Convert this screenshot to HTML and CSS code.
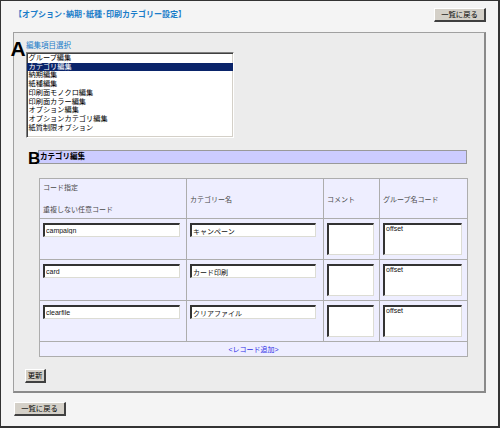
FILE: index.html
```html
<!DOCTYPE html>
<html lang="ja">
<head>
    <meta charset="UTF-8">
    <meta name="viewport" content="width=device-width, initial-scale=1.0">
    <title>オプション・納期・紙種・印刷カテゴリー設定</title>
    <link rel="stylesheet" href="styles.css">
</head>
<body>
    <div class="page">
        <div class="topbar">
            <h1 class="title">【オプション･納期･紙種･印刷カテゴリー設定】</h1>
            <button class="btn btn-back">一覧に戻る</button>
        </div>

        <div class="panel">
            <span class="marker marker-a">A</span>
            <div class="field-label">編集項目選択</div>
            <div class="listbox">
                <div class="item">グループ編集</div>
                <div class="item selected">カテゴリ編集</div>
                <div class="item">納期編集</div>
                <div class="item">紙種編集</div>
                <div class="item">印刷面モノクロ編集</div>
                <div class="item">印刷面カラー編集</div>
                <div class="item">オプション編集</div>
                <div class="item">オプションカテゴリ編集</div>
                <div class="item">紙質制限オプション</div>
            </div>

            <div class="section">
                <span class="marker marker-b">B</span>
                <div class="section-head">カテゴリ編集</div>

                <table class="grid">
                    <colgroup>
                        <col class="c-code">
                        <col class="c-name">
                        <col class="c-comment">
                        <col class="c-group">
                    </colgroup>
                    <tr class="head">
                        <td>
                            <span class="line">コード指定</span>
                            <span class="line second">重複しない任意コード</span>
                        </td>
                        <td>カテゴリー名</td>
                        <td>コメント</td>
                        <td>グループ名コード</td>
                    </tr>
                    <tr class="row">
                        <td><input class="in-code" type="text" value="campaign" spellcheck="false"></td>
                        <td><input class="in-name" type="text" value="キャンペーン" spellcheck="false"></td>
                        <td><textarea class="ta-comment" spellcheck="false"></textarea></td>
                        <td><textarea class="ta-group" spellcheck="false">offset</textarea></td>
                    </tr>
                    <tr class="row">
                        <td><input class="in-code" type="text" value="card" spellcheck="false"></td>
                        <td><input class="in-name" type="text" value="カード印刷" spellcheck="false"></td>
                        <td><textarea class="ta-comment" spellcheck="false"></textarea></td>
                        <td><textarea class="ta-group" spellcheck="false">offset</textarea></td>
                    </tr>
                    <tr class="row">
                        <td><input class="in-code" type="text" value="clearfile" spellcheck="false"></td>
                        <td><input class="in-name" type="text" value="クリアファイル" spellcheck="false"></td>
                        <td><textarea class="ta-comment" spellcheck="false"></textarea></td>
                        <td><textarea class="ta-group" spellcheck="false">offset</textarea></td>
                    </tr>
                    <tr class="foot">
                        <td colspan="4"><a class="add-link" href="#">&lt;レコード追加&gt;</a></td>
                    </tr>
                </table>
            </div>

            <button class="btn btn-update">更新</button>
        </div>

        <button class="btn btn-back btn-bottom">一覧に戻る</button>
    </div>
</body>
</html>
```

FILE: styles.css
```css
body {
    margin: 0;
    font-family: "Liberation Sans", "Noto Sans CJK JP", sans-serif;
}

.page {
    width: 500px;
    height: 428px;
    box-sizing: border-box;
    border: 1px solid #333;
    border-right-width: 2px;
    border-bottom-width: 2px;
    background-color: #f4f4f4;
    padding: 7px 12px 0 12px;
}

.topbar {
    display: flex;
    justify-content: space-between;
    align-items: center;
}

.title {
    margin: 0 0 0 1px;
    font-size: 8px;
    font-weight: bold;
    line-height: 14px;
    color: #1a7cc9;
}

.btn {
    display: block;
    height: 14px;
    padding: 0;
    font-family: inherit;
    font-size: 7.3px;
    line-height: 1;
    color: #000;
    background-color: #d4d0c8;
    border-style: solid;
    border-width: 1px 2px 2px 1px;
    border-color: #fff #404040 #404040 #fff;
}

.btn-back {
    width: 52px;
}

.btn-bottom {
    margin: 9px 0 0 1px;
}

.btn-update {
    width: 21px;
    margin: 12px 0 0 -1px;
}

.panel {
    position: relative;
    height: 361px;
    margin-top: 10px;
    box-sizing: border-box;
    border: 1px solid #a0a0a0;
    border-right: 2px solid #8a8a8a;
    border-bottom: 2px solid #8a8a8a;
    background-color: #ececec;
    padding: 7px 17px 0 12px;
}

.marker {
    position: absolute;
    font-family: "Liberation Sans", sans-serif;
    font-weight: bold;
    color: #000;
}

.marker-a {
    left: -3.5px;
    top: 5px;
    font-size: 21px;
    line-height: 21px;
}

.marker-b {
    left: 2px;
    top: 0;
    font-size: 17px;
    line-height: 17px;
}

.field-label {
    font-size: 7.5px;
    line-height: 11px;
    color: #1a7cc9;
    margin-bottom: 1px;
}

.listbox {
    width: 208px;
    height: 86px;
    box-sizing: border-box;
    background-color: #fff;
    border: 1px solid;
    border-color: #808080 #fff #fff #808080;
    box-shadow: inset 1px 1px #404040, inset -1px -1px #d4d0c8;
    padding-top: 1px;
}

.listbox .item {
    font-size: 7.2px;
    line-height: 8.7px;
    padding-left: 1.5px;
    color: #000;
    white-space: nowrap;
}

.listbox .item.selected {
    background-color: #0a246a;
    color: #fff;
}

.section {
    position: relative;
    margin-top: 12px;
    padding-left: 12px;
}

.section-head {
    height: 14px;
    box-sizing: border-box;
    border: 1px solid #999;
    background-color: #ccccff;
    font-size: 7.5px;
    font-weight: bold;
    line-height: 12px;
    padding-left: 1px;
}

.grid {
    width: 428px;
    margin: 14px 0 0 1px;
    table-layout: fixed;
    border-collapse: collapse;
    background-color: #eeeeff;
    border: 1px solid #999;
}

.grid .c-code { width: 147px; }
.grid .c-name { width: 137px; }
.grid .c-comment { width: 56px; }
.grid .c-group { width: 88px; }

.grid td {
    border: 1px solid #adadad;
    padding: 4px 3px;
    font-size: 7px;
    color: #4a4a4a;
    vertical-align: top;
}

.grid .head td {
    height: 31px;
    vertical-align: middle;
}

.grid .head .line {
    display: block;
    line-height: 9.5px;
}

.grid .head .second {
    margin-top: 12px;
}

.grid .foot td {
    height: 14px;
    padding: 0;
    text-align: center;
    vertical-align: middle;
}

.add-link {
    color: #2f2fe6;
    text-decoration: none;
}

.grid input,
.grid textarea {
    display: block;
    box-sizing: border-box;
    margin: 0;
    padding: 0 0 0 1px;
    font-family: inherit;
    font-size: 7px;
    color: #111;
    background-color: #fff;
    border-style: solid;
    border-width: 2px 1px 1px 2px;
    border-color: #333 #dcdcd4 #dcdcd4 #333;
    outline: none;
}

.grid input {
    height: 14px;
}

.grid textarea {
    height: 32px;
    resize: none;
    overflow: hidden;
}

.in-code { width: 137px; }
.in-name { width: 126px; }
.ta-comment { width: 47px; }
.ta-group { width: 79px; }
```
